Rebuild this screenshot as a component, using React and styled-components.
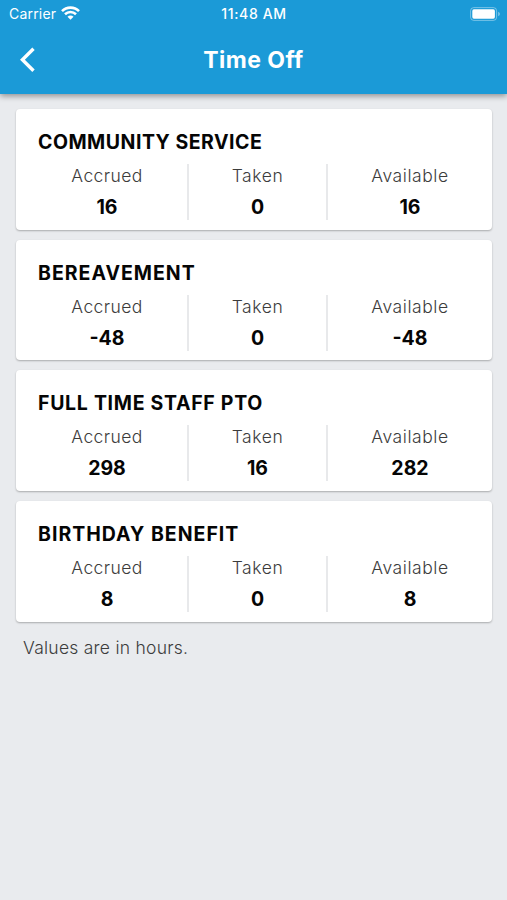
import styled, { createGlobalStyle } from "styled-components";

const benefits = [
  { name: "COMMUNITY SERVICE", spacing: "0.5px", accrued: 16, taken: 0, available: 16 },
  { name: "BEREAVEMENT", spacing: "1px", accrued: -48, taken: 0, available: -48 },
  { name: "FULL TIME STAFF PTO", spacing: "0.7px", accrued: 298, taken: 16, available: 282 },
  { name: "BIRTHDAY BENEFIT", spacing: "1px", accrued: 8, taken: 0, available: 8 },
];

export default function App() {
  return (
    <Page>
      <GlobalStyle />
      <Header>
        <StatusBar>
          <Carrier>
            <span>Carrier</span>
            <WifiIcon />
          </Carrier>
          <Clock>11:48 AM</Clock>
          <BatteryIcon />
        </StatusBar>
        <NavBar>
          <BackButton aria-label="Back">
            <BackIcon />
          </BackButton>
          <PageTitle>Time Off</PageTitle>
        </NavBar>
      </Header>

      <List>
        {benefits.map((benefit) => (
          <BenefitCard key={benefit.name} {...benefit} />
        ))}
      </List>
      <Note>Values are in hours.</Note>
    </Page>
  );
}

function BenefitCard({ name, spacing, accrued, taken, available }) {
  return (
    <Card>
      <CardTitle $spacing={spacing}>{name}</CardTitle>
      <Balances>
        <Balance>
          <Label $spacing="0.4px">Accrued</Label>
          <Value>{accrued}</Value>
        </Balance>
        <Balance>
          <Label $spacing="0.6px">Taken</Label>
          <Value>{taken}</Value>
        </Balance>
        <Balance>
          <Label $spacing="0.55px">Available</Label>
          <Value>{available}</Value>
        </Balance>
      </Balances>
    </Card>
  );
}

function WifiIcon() {
  return (
    <svg width="19" height="14" viewBox="0 0 19 14" fill="none" stroke="#fff" strokeWidth="2.6">
      <path d="M1 5.1C5.7 0.4 13.3 0.4 18 5.1" />
      <path d="M4 8.2C7.1 5.2 11.9 5.2 15 8.2" />
      <path d="M9.5 13.8L6.5 10.8C8.1 9.2 10.9 9.2 12.5 10.8Z" fill="#fff" stroke="none" />
    </svg>
  );
}

function BatteryIcon() {
  return (
    <svg width="31" height="14" viewBox="0 0 31 14">
      <rect x="0.6" y="0.6" width="26" height="12.8" rx="3.2" fill="none" stroke="#fff" strokeOpacity="0.4" />
      <rect x="2.3" y="2.3" width="22.6" height="9.4" rx="1.6" fill="#fff" />
      <path d="M28.2 4.8C30.4 5.6 30.4 8.4 28.2 9.2Z" fill="#fff" fillOpacity="0.45" />
    </svg>
  );
}

function BackIcon() {
  return (
    <svg width="15" height="26" viewBox="0 0 15 26" fill="none" stroke="#fff" strokeWidth="3.4">
      <path d="M13.5 1.8L2.4 12.8L13.5 23.8" />
    </svg>
  );
}

const GlobalStyle = createGlobalStyle`
  * {
    box-sizing: border-box;
  }
  body {
    margin: 0;
    background-color: #e9ebee;
    font-family: "Inter", "Liberation Sans", sans-serif;
  }
`;

const Page = styled.div`
  min-height: 900px;
  background-color: #e9ebee;
`;

const Header = styled.header`
  height: 94px;
  color: #fff;
  background-color: #1b9ad7;
  box-shadow: 0 2px 6px rgba(0, 0, 0, 0.4);
`;

const StatusBar = styled.div`
  display: grid;
  grid-template-columns: 1fr auto 1fr;
  align-items: center;
  height: 27px;
  padding: 0 6px 0 9px;
  font-size: 14px;
  svg:last-child {
    justify-self: end;
  }
`;

const Carrier = styled.div`
  display: flex;
  align-items: center;
  gap: 5px;
  letter-spacing: 0.2px;
  svg {
    margin-top: -1px;
  }
`;

const Clock = styled.span`
  margin-right: 2px;
  font-size: 14px;
  font-weight: 500;
  letter-spacing: 0.65px;
`;

const NavBar = styled.nav`
  display: grid;
  grid-template-columns: 60px 1fr 60px;
  align-items: center;
  height: 65px;
`;

const BackButton = styled.button`
  display: flex;
  padding: 0 0 0 20px;
  border: 0;
  background: none;
`;

const PageTitle = styled.h1`
  margin: 0;
  font-size: 23px;
  font-weight: 700;
  line-height: 30px;
  letter-spacing: 0.45px;
  text-align: center;
`;

const List = styled.main`
  display: flex;
  flex-direction: column;
  gap: 10px;
  padding: 15px 15px 0 16px;
`;

const Card = styled.section`
  height: 120.7px;
  padding: 20px 0 0 11px;
  border-radius: 4px;
  background-color: #fff;
  box-shadow: 0 1px 2px rgba(0, 0, 0, 0.28);
`;

const CardTitle = styled.h2`
  margin: 0;
  padding-left: 11px;
  font-size: 19.5px;
  font-weight: 700;
  line-height: 26px;
  letter-spacing: ${(props) => props.$spacing};
  color: #050505;
`;

const Balances = styled.div`
  display: grid;
  grid-template-columns: 162px 139px 1fr;
  margin-top: 9px;
`;

const Balance = styled.div`
  display: flex;
  flex-direction: column;
  align-items: center;
  height: 56px;
  &:not(:last-child) {
    border-right: 2px solid #e8e9eb;
  }
`;

const Label = styled.span`
  font-size: 17.5px;
  font-weight: 300;
  line-height: 24px;
  letter-spacing: ${(props) => props.$spacing};
  color: #3c3c3c;
`;

const Value = styled.span`
  margin-top: 7px;
  font-size: 19.5px;
  font-weight: 700;
  line-height: 25px;
  color: #050505;
`;

const Note = styled.p`
  margin: 14px 0 0 23px;
  font-size: 17.5px;
  font-weight: 300;
  line-height: 24px;
  letter-spacing: 0.25px;
  color: #3c3c3c;
`;
